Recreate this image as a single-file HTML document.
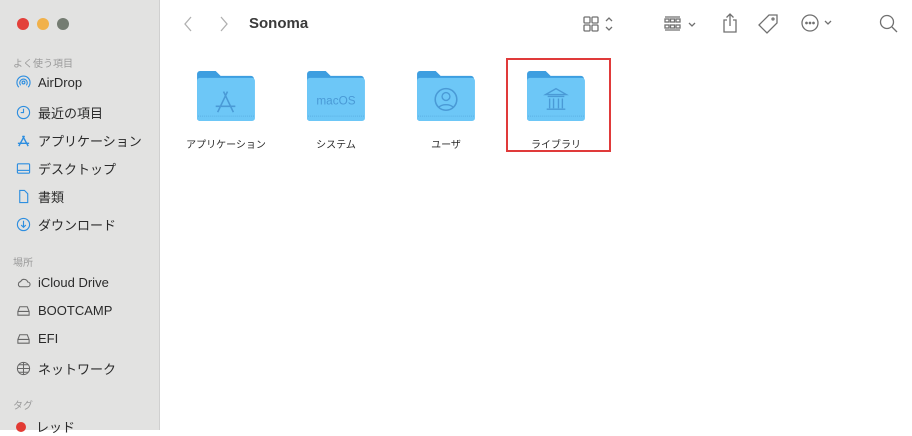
<!DOCTYPE html>
<html><head><meta charset="utf-8"><style>
*{margin:0;padding:0;box-sizing:border-box}
body{width:912px;height:430px;overflow:hidden;background:#fff;font-family:"Liberation Sans","Noto Sans CJK JP",sans-serif;position:relative}
#sb{position:absolute;left:0;top:0;width:160px;height:430px;background:#e2e2e1;border-right:1px solid #d0d0d0}
.dot{position:absolute;top:18px;width:12px;height:12px;border-radius:50%}
.h{position:absolute;left:13px;font-size:10px;color:#9a9a9a}
.it{position:absolute;left:16px;font-size:13px;color:#2a2a2a;display:flex;align-items:center}
.it svg{width:15px;height:15px;margin-right:7px}
.fo{position:absolute;top:70px;width:60px;height:52px}
.lb{position:absolute;top:136px;font-size:10px;color:#2a2a2a;text-align:center;width:110px}
.tb{position:absolute;stroke:#707070;fill:none;stroke-width:1.3}
</style></head><body>
<div id="sb">
<div class="dot" style="left:17px;background:#e3403a"></div>
<div class="dot" style="left:37px;background:#f1b14a"></div>
<div class="dot" style="left:57px;background:#747c72"></div>
<div class="h" style="top:55px">よく使う項目</div>
<div class="it" style="top:75px"><svg viewBox="0 0 16 16" fill="none" stroke="#2d8ee0" stroke-width="1.2"><circle cx="8" cy="8" r="1.5"/><path d="M5 11a4 4 0 1 1 6 0M3 13a7 7 0 1 1 10 0"/></svg>AirDrop</div>
<div class="it" style="top:103px"><svg viewBox="0 0 16 16" fill="none" stroke="#2d8ee0" stroke-width="1.2"><circle cx="8" cy="8" r="6.5"/><path d="M8 4v4H5"/></svg>最近の項目</div>
<div class="it" style="top:131px"><svg viewBox="0 0 16 16" fill="none" stroke="#2d8ee0" stroke-width="1.5"><path d="M3 14L9 3M13 14L7 3M2 11h12"/></svg>アプリケーション</div>
<div class="it" style="top:159px"><svg viewBox="0 0 16 16" fill="none" stroke="#2d8ee0" stroke-width="1.2"><rect x="1.5" y="3" width="13" height="10" rx="1"/><path d="M2 10h12"/></svg>デスクトップ</div>
<div class="it" style="top:187px"><svg viewBox="0 0 16 16" fill="none" stroke="#2d8ee0" stroke-width="1.2"><path d="M4 1.5h5l3.5 3.5v9.5H4z"/></svg>書類</div>
<div class="it" style="top:215px"><svg viewBox="0 0 16 16" fill="none" stroke="#2d8ee0" stroke-width="1.2"><circle cx="8" cy="8" r="6.5"/><path d="M8 4v7M5.5 8.5L8 11l2.5-2.5"/></svg>ダウンロード</div>
<div class="h" style="top:254px">場所</div>
<div class="it" style="top:275px"><svg viewBox="0 0 16 16" fill="none" stroke="#666" stroke-width="1.1"><path d="M4 12.5h8.5a2.5 2.5 0 0 0 0-5A4 4 0 0 0 5 7a3 3 0 0 0-1 5.5z"/></svg>iCloud Drive</div>
<div class="it" style="top:303px"><svg viewBox="0 0 16 16" fill="none" stroke="#666" stroke-width="1.1"><path d="M2 9l2-5h8l2 5v4H2zM2 9h12"/></svg>BOOTCAMP</div>
<div class="it" style="top:331px"><svg viewBox="0 0 16 16" fill="none" stroke="#666" stroke-width="1.1"><path d="M2 9l2-5h8l2 5v4H2zM2 9h12"/></svg>EFI</div>
<div class="it" style="top:359px"><svg viewBox="0 0 16 16" fill="none" stroke="#666" stroke-width="1.1"><circle cx="8" cy="8" r="6.5"/><path d="M1.5 8h13M8 1.5v13M3 4h10M3 12h10"/></svg>ネットワーク</div>
<div class="h" style="top:397px">タグ</div>
<div class="it" style="top:417px"><span style="width:10px;height:10px;border-radius:50%;background:#e23a33;margin-right:10px"></span>レッド</div>
</div>
<svg class="tb" style="left:180px;top:14px" width="16" height="20"><path d="M11 3L5 10l6 7" stroke="#b0b0b0"/></svg>
<svg class="tb" style="left:216px;top:14px" width="16" height="20"><path d="M5 3l6 7-6 7" stroke="#b0b0b0"/></svg>
<div style="position:absolute;left:249px;top:15px;font-size:15px;font-weight:bold;color:#3a3a3a">Sonoma</div>
<svg class="tb" style="left:583px;top:15px" width="36" height="20"><rect x="1" y="2" width="6" height="6" rx="1"/><rect x="9" y="2" width="6" height="6" rx="1"/><rect x="1" y="10" width="6" height="6" rx="1"/><rect x="9" y="10" width="6" height="6" rx="1"/><path d="M23 6l3-3 3 3M23 12l3 3 3-3"/></svg>
<svg class="tb" style="left:664px;top:15px" width="36" height="20"><path d="M1 2h15M1 15h15"/><rect x="1" y="4" width="4" height="3"/><rect x="6.5" y="4" width="4" height="3"/><rect x="12" y="4" width="4" height="3"/><rect x="1" y="10" width="4" height="3"/><rect x="6.5" y="10" width="4" height="3"/><rect x="12" y="10" width="4" height="3"/><path d="M25 8l3 3 3-3"/></svg>
<svg class="tb" style="left:720px;top:11px" width="20" height="24" stroke="#aaa"><path d="M7 9H4v12h12V9h-3M10 15V3M6.5 6.5L10 3l3.5 3.5"/></svg>
<svg class="tb" style="left:756px;top:12px" width="26" height="24" stroke="#aaa"><path d="M3 13L13 3h8v8L11 21z"/><circle cx="17" cy="7" r="1"/></svg>
<svg class="tb" style="left:800px;top:13px" width="40" height="20"><circle cx="10" cy="10" r="8"/><circle cx="6.5" cy="10" r=".7"/><circle cx="10" cy="10" r=".7"/><circle cx="13.5" cy="10" r=".7"/><path d="M25 8l3 3 3-3"/></svg>
<svg class="tb" style="left:878px;top:13px" width="22" height="22" stroke="#555" stroke-width="1.6"><circle cx="9" cy="9" r="6.5"/><path d="M14 14l5 5"/></svg>
<svg width="0" height="0" style="position:absolute"><defs><g id="fd"><path d="M1 4a3 3 0 0 1 3-3h16l5 5h31a3 3 0 0 1 3 3v40a3 3 0 0 1-3 3H4a3 3 0 0 1-3-3z" fill="#3d9ee0"/><rect x="1" y="8" width="59" height="44" rx="3" fill="#6dc7f7"/><path d="M2 47h57" stroke="#5bb0e3" stroke-width="1" stroke-dasharray="1 1"/></g></defs></svg>
<svg class="fo" style="left:196px" viewBox="0 0 61 53"><use href="#fd"/><path d="M22 43L32 22M38 43L28 22M20 37h20" stroke="#4a9ad6" stroke-width="1.6" fill="none"/></svg>
<svg class="fo" style="left:306px" viewBox="0 0 61 53"><use href="#fd"/><text x="30.5" y="35" font-size="12" fill="#4a9ad6" text-anchor="middle" font-family="Liberation Sans">macOS</text></svg>
<svg class="fo" style="left:416px" viewBox="0 0 61 53"><use href="#fd"/><circle cx="30.5" cy="30" r="11" stroke="#4a9ad6" stroke-width="1.6" fill="none"/><circle cx="30.5" cy="27" r="4" stroke="#4a9ad6" stroke-width="1.4" fill="none"/><path d="M23 38a9 6 0 0 1 15 0" stroke="#4a9ad6" stroke-width="1.4" fill="none"/></svg>
<svg class="fo" style="left:526px" viewBox="0 0 61 53"><use href="#fd"/><g stroke="#4a9ad6" stroke-width="1.4" fill="none"><path d="M20 25l10.5-6 10.5 6zM22 27h17M24 29v10M28 29v10M33 29v10M37 29v10M21 40h19"/></g></svg>
<div class="lb" style="left:171px">アプリケーション</div>
<div class="lb" style="left:281px">システム</div>
<div class="lb" style="left:391px">ユーザ</div>
<div class="lb" style="left:501px">ライブラリ</div>
<div style="position:absolute;left:506px;top:58px;width:105px;height:94px;border:2px solid #e03a3a"></div>
</body></html>
